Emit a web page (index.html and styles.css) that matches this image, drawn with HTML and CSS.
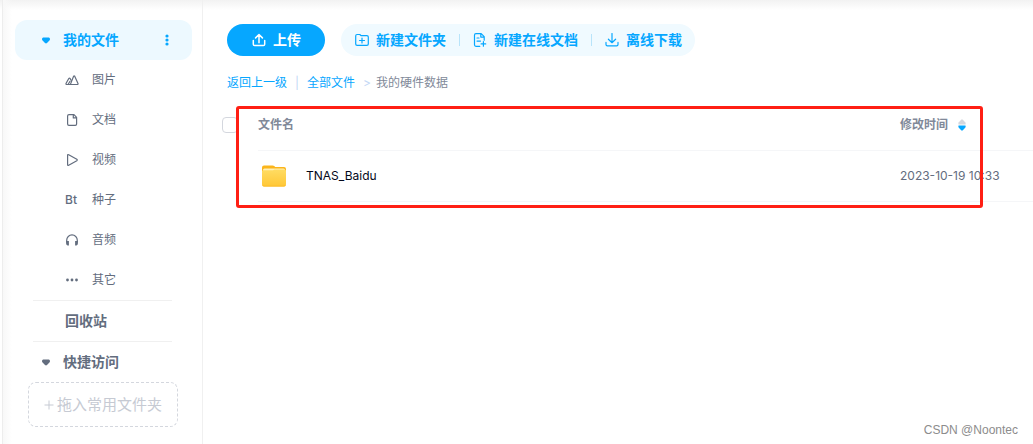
FILE: index.html
```html
<!DOCTYPE html>
<html lang="zh-CN">

<head>
    <meta charset="UTF-8">
    <meta name="viewport" content="width=device-width, initial-scale=1.0">
    <title>我的文件</title>
    <link rel="stylesheet" href="styles.css">
</head>

<body>
    <div class="page">
        <!-- Sidebar -->
        <nav class="sidebar">
            <div class="group active">
                <svg class="caret" viewBox="0 0 8 7"><path d="M1.2 0.5h5.6q1.2 0.3 1.2 1.7q0 0.8-0.8 1.6L5 6q-1 0.9-2 0L0.8 3.8Q0 3 0 2.2Q0 0.8 1.2 0.5z" /></svg>
                <a class="group-name" href="#">我的文件</a>
                <button class="more" type="button" aria-label="更多">
                    <svg viewBox="0 0 4 12"><circle cx="2" cy="2" r="1.6" /><circle cx="2" cy="6" r="1.6" /><circle cx="2" cy="10" r="1.6" /></svg>
                </button>
            </div>
            <ul class="types">
                <li><a class="type" href="#">
                    <svg class="icon" viewBox="0 0 14 14"><path d="M5.4 11.4L8.6 3.2q0.5-0.9 1.1 0l3.3 7.2q0.3 1-0.7 1.1H1.8q-1.2-0.1-0.7-1.2L3.8 5.5q0.6-0.8 1.3 0l0.8 1.5M3.2 11.3l1.8-3" /></svg>
                    图片
                </a></li>
                <li><a class="type" href="#">
                    <svg class="icon" viewBox="0 0 14 14"><path d="M4 1.6h5L11.6 4.3v6.8q0 1.3-1.3 1.3H4q-1.4 0-1.4-1.3V2.9Q2.6 1.6 4 1.6zM8.3 1.8v3.1h3.2" /></svg>
                    文档
                </a></li>
                <li><a class="type" href="#">
                    <svg class="icon" viewBox="0 0 14 14"><path d="M2.6 2.4q0-1.2 1.1-0.7l8.1 4.6q0.9 0.7 0 1.4l-8.1 4.6q-1.1 0.5-1.1-0.7z" /></svg>
                    视频
                </a></li>
                <li><a class="type" href="#">
                    <span class="bt">Bt</span>
                    种子
                </a></li>
                <li><a class="type" href="#">
                    <svg class="icon" viewBox="0 0 14 14"><path d="M1.7 9V7.2a5.3 5.3 0 0 1 10.6 0V9" /><path class="solid" d="M1.1 8h2.8v4.4H2.6Q1.1 12.2 1.1 10.6zM12.9 8h-2.8v4.4h1.3q1.5-0.2 1.5-1.8z" /></svg>
                    音频
                </a></li>
                <li><a class="type" href="#">
                    <svg class="icon" viewBox="0 0 14 14"><g class="solid"><circle cx="2.5" cy="7" r="1.4" /><circle cx="7" cy="7" r="1.4" /><circle cx="11.5" cy="7" r="1.4" /></g></svg>
                    其它
                </a></li>
            </ul>
            <div class="recycle"><a href="#">回收站</a></div>
            <div class="group">
                <svg class="caret" viewBox="0 0 8 7"><path d="M1.2 0.5h5.6q1.2 0.3 1.2 1.7q0 0.8-0.8 1.6L5 6q-1 0.9-2 0L0.8 3.8Q0 3 0 2.2Q0 0.8 1.2 0.5z" /></svg>
                <a class="group-name" href="#">快捷访问</a>
            </div>
            <div class="drop"><svg class="plus" viewBox="0 0 10 10"><path d="M5 0.5v9M0.5 5h9" /></svg>拖入常用文件夹</div>
        </nav>

        <!-- File list -->
        <main class="main">
            <div class="toolbar">
                <button class="btn upload" type="button">
                    <svg class="icon" viewBox="0 0 14 14"><path d="M1.3 7.6v3.7q0 1.3 1.3 1.3h8.8q1.3 0 1.3-1.3V7.6M7 9.8V1.8M3.6 4.9L7 1.5l3.4 3.4" /></svg>
                    上传
                </button>
                <div class="btn-group">
                    <button class="btn" type="button">
                        <svg class="icon" viewBox="0 0 14 14"><path d="M0.7 3q0-1.500 1.400-1.500h2.700l1.400 1.200h5.700q1.400 0 1.400 1.400v6.800q0 1.400-1.400 1.400H2.100q-1.400 0-1.400-1.400zM7 5v5M4.500 7.500h5" /></svg>
                        新建文件夹
                    </button>
                    <button class="btn" type="button">
                        <svg class="icon" viewBox="0 0 14 14"><path d="M6.8 13.3H3q-1.5 0-1.5-1.5V2.2Q1.5 0.7 3 0.7h5.2l3 3v3.5M7.8 0.9v3.2h3.2M4 5h2M4 8.1h3.5M10.4 8.6v4.6M8.1 10.9h4.6" /></svg>
                        新建在线文档
                    </button>
                    <button class="btn" type="button">
                        <svg class="icon" viewBox="0 0 14 14"><path d="M1 9.4v2q0 1.400 1.400 1.400h9.200q1.400 0 1.400-1.400v-2M7 0.500v9M3.400 6.200L7 9.700l3.600-3.500" /></svg>
                        离线下载
                    </button>
                </div>
            </div>

            <div class="crumbs">
                <a href="#">返回上一级</a>
                <span class="bar">|</span>
                <a href="#">全部文件</a>
                <span class="arrow">&gt;</span>
                <span>我的硬件数据</span>
            </div>

            <div class="files">
                <table class="file-table">
                    <thead>
                        <tr>
                            <th class="check"><input type="checkbox" aria-label="全选"></th>
                            <th class="name">文件名</th>
                            <th class="time">
                                <button class="sort" type="button">修改时间
                                    <svg viewBox="0 0 8 12"><path class="up" d="M0.5 5.4Q0 4.2 0.8 3.2L3.2 0.7q0.8-0.7 1.6 0l2.4 2.5q0.8 1 0.3 2.2z" /><path class="down" d="M0.5 6.6Q0 7.8 0.8 8.8l2.4 2.5q0.8 0.7 1.6 0l2.4-2.5q0.8-1 0.3-2.2z" /></svg>
                                </button>
                            </th>
                        </tr>
                    </thead>
                    <tbody>
                        <tr>
                            <td class="check"></td>
                            <td class="name">
                                <a class="file" href="#">
                                    <svg class="folder" viewBox="0 0 24 22">
                                        <defs>
                                            <linearGradient id="folder-front" x1="0" y1="0" x2="0" y2="1">
                                                <stop offset="0" stop-color="#ffdc62" />
                                                <stop offset="1" stop-color="#ffc736" />
                                            </linearGradient>
                                        </defs>
                                        <path d="M0 2.5Q0 0.5 2 0.5h8.500q1.200 0 2 0.800l0.800 0.700H22q2 0 2 2V14H0z" fill="#fbb51b" />
                                        <path d="M1 5q0-1.500 1.500-1.500h19q1.500 0 1.500 1.500v5H1z" fill="#fff0b8" />
                                        <path d="M0 6.500q0-1 1-1.200h10l1.500-0.800h10q1.500 0 1.500 1.500V19.500q0 2-2 2H2q-2 0-2-2z" fill="url(#folder-front)" />
                                        <path d="M0.200 20q0.500 1.500 2 1.500h19.600q1.500 0 2-1.500l-1.800 0.700H2z" fill="#fbb823" />
                                    </svg>
                                    TNAS_Baidu
                                </a>
                            </td>
                            <td class="time">2023-10-19 10:33</td>
                        </tr>
                    </tbody>
                </table>
                <div class="highlight"></div>
            </div>
        </main>
    </div>
    <div class="watermark">CSDN @Noontec</div>
</body>

</html>
```
FILE: styles.css
```css
/* General Styling */
* {
    box-sizing: border-box;
}

body {
    margin: 0;
    font-family: 'Inter', 'Noto Sans CJK SC', sans-serif;
    font-size: 12px;
    line-height: 20px;
    color: #636d7e;
    background: #fff;
}

a {
    color: inherit;
    text-decoration: none;
}

button {
    padding: 0;
    border: none;
    background: none;
    font: inherit;
    color: inherit;
    cursor: pointer;
}

svg {
    display: block;
    flex: none;
}

.page {
    display: flex;
    min-height: 100vh;
    padding-left: 2px;
    background: linear-gradient(to bottom, #f2f2f2, rgba(255, 255, 255, 0) 10px);
}

/* Sidebar */
.sidebar {
    flex: none;
    width: 201px;
    padding: 20px 10px 16px 12px;
    border-left: 1px solid #ededed;
    border-right: 1px solid #f0f0f0;
    background: linear-gradient(to right, #f8f8f8, rgba(255, 255, 255, 0) 9px);
}

.group {
    display: flex;
    align-items: center;
    height: 40px;
    padding: 0 23px 0 27px;
    border-radius: 12px;
    font-size: 14px;
    font-weight: bold;
}

.group.active {
    background: #edf9ff;
    color: #06a7ff;
}

.group-name {
    flex: 1;
    margin-left: 13px;
}

.caret {
    width: 8px;
    height: 7px;
    fill: currentColor;
}

.more svg {
    width: 4px;
    height: 12px;
    fill: currentColor;
}

.types {
    margin: 0;
    padding: 0;
    list-style: none;
}

.type {
    display: flex;
    align-items: center;
    gap: 13px;
    height: 40px;
    padding-left: 50px;
}

.icon {
    width: 14px;
    height: 14px;
    fill: none;
    stroke: currentColor;
    stroke-width: 1.2;
    stroke-linecap: round;
    stroke-linejoin: round;
}

.icon .solid {
    fill: currentColor;
    stroke: none;
}

.bt {
    width: 14px;
    font-weight: 500;
}

.recycle {
    margin: 0 20px 0 18px;
    padding: 10px 32px;
    border-top: 1px solid #f0f0f0;
    border-bottom: 1px solid #f0f0f0;
    font-size: 14px;
    font-weight: bold;
}

.drop {
    display: flex;
    align-items: center;
    justify-content: center;
    gap: 3px;
    height: 45px;
    margin: 0 14px 0 13px;
    border: 1px dashed #d4d7de;
    border-radius: 8px;
    font-size: 15px;
    color: #c6cad3;
}

.plus {
    width: 10px;
    height: 10px;
    fill: none;
    stroke: currentColor;
}

/* Toolbar */
.main {
    flex: 1;
    min-width: 0;
    padding-top: 24px;
}

.toolbar {
    display: flex;
    gap: 16px;
    margin-left: 24px;
    font-size: 14px;
    font-weight: bold;
    color: #06a7ff;
}

.btn {
    display: flex;
    align-items: center;
    gap: 7px;
    white-space: nowrap;
}

.upload {
    height: 32px;
    padding: 0 24px 0 25px;
    border-radius: 16px;
    background: #06a7ff;
    color: #fff;
}

.upload .icon {
    stroke-width: 1.5;
}

.btn-group {
    display: flex;
    align-items: center;
    height: 32px;
    padding-left: 1px;
    border-radius: 16px;
    background: #f0faff;
}

.btn-group .btn {
    height: 12px;
    padding: 0 13px;
}

.btn-group .btn + .btn {
    border-left: 1px solid #b8e4fa;
}

/* Breadcrumb */
.crumbs {
    display: flex;
    margin: 17px 24px 0;
    color: #818999;
}

.crumbs a {
    color: #06a7ff;
}

.bar {
    margin: 0 8px;
    color: #c4d8f6;
}

.arrow {
    margin: 0 5px 0 8px;
    color: #c4d8f6;
}

/* File table */
.files {
    position: relative;
    margin: 7px 0 0 19px;
}

.file-table {
    width: 100%;
    border-collapse: collapse;
    table-layout: fixed;
}

.file-table th,
.file-table td {
    height: 51px;
    padding: 0;
    border-bottom: 1px solid #f5f6f8;
    text-align: left;
}

.file-table th {
    height: 50px;
    color: #818999;
}

.file-table .check {
    width: 36px;
    border-bottom: none;
}

.file-table .time {
    width: 133px;
}

input[type="checkbox"] {
    display: block;
    appearance: none;
    width: 16px;
    height: 16px;
    margin: 0;
    border: 1px solid #d4d7de;
    border-radius: 4px;
}

.sort {
    display: flex;
    align-items: center;
    gap: 10px;
}

.sort svg {
    width: 8px;
    height: 12px;
}

.up {
    fill: #d4d7de;
}

.down {
    fill: #06a7ff;
}

.file {
    display: flex;
    align-items: center;
    gap: 20px;
    padding-left: 4px;
    color: #03081a;
}

.folder {
    width: 24px;
    height: 22px;
}

.highlight {
    position: absolute;
    top: 6px;
    bottom: -6px;
    left: 14px;
    right: 50px;
    border: 3px solid #ff1f14;
    border-radius: 3px;
    pointer-events: none;
}

.watermark {
    position: absolute;
    right: 15px;
    bottom: 4px;
    font-family: 'Liberation Sans', sans-serif;
    color: #8c8c8c;
}
```
